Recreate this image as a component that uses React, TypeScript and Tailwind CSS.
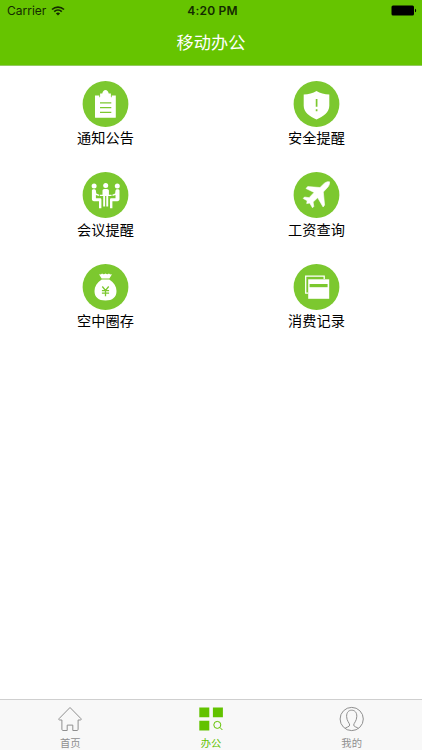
import type { ReactNode } from "react";

type MenuItem = {
  label: string;
  icon: ReactNode;
};

const items: MenuItem[] = [
  {
    label: "通知公告",
    icon: (
      <>
        <path
          d="M12.5 14.5h4.3v2.2h12.4v-2.2h4.1v21.7a.6.6 0 0 1-.6.6H13.1a.6.6 0 0 1-.6-.6z"
          fill="#fff"
        />
        <path d="M17.6 15.9v-3.3h2.2c.4-2.4 1.6-3.6 3.2-3.6s2.8 1.2 3.2 3.6h2.2v3.3z" fill="#fff" />
        <path d="M16.8 16.5h12.4" stroke="#fff" />
        <path d="M17.5 21.8h11.3M17.5 26.6h11.3M17.5 31.3h11.3" stroke="#7cc82f" strokeWidth="1.3" />
      </>
    ),
  },
  {
    label: "安全提醒",
    icon: (
      <>
        <path
          d="M23 10c3.5 2.2 8 3.3 12.8 3.5v11.2c0 6.5-6 10.8-12.8 13.7-6.8-2.9-12.8-7.2-12.8-13.7V13.5c4.8-.2 9.300-1.300 12.800-3.500z"
          fill="#fff"
        />
        <path d="M23.1 18v7.800M23.1 28.200v2" stroke="#7cc82f" strokeWidth="1.700" />
      </>
    ),
  },
  {
    label: "会议提醒",
    icon: (
      <g fill="#fff">
        <circle cx="11.6" cy="14.1" r="2.5" />
        <circle cx="23.200" cy="13.500" r="2.500" />
        <circle cx="34.800" cy="14.100" r="2.500" />
        <path d="M9.400 18.600c0-1.800 3.800-1.800 4 0l.4 2.800 2.900 1.300-.5 1.200-2.800-.9v3.300h4.100c.9 0 1.400.5 1.400 1.400v8.500h-2.400v-7h-4.900c-1.500 0-2.200-.8-2.200-2.200z" />
        <path d="M37 18.600c0-1.800-3.800-1.800-4 0l-.4 2.800-2.900 1.300.5 1.200 2.800-.9v3.300h-4.100c-.9 0-1.400.5-1.400 1.400v8.500h2.400v-7h4.900c1.500 0 2.200-.8 2.200-2.200z" />
        <path d="M20 22.800v-4.300c0-1.900 6.400-1.900 6.400 0v4.300h2.700v1.300H17.300v-1.300z" />
        <path d="M20.700 24h1.900v10.600h-1.900zM23.800 24h1.900v10.600h-1.900z" />
      </g>
    ),
  },
  {
    label: "工资查询",
    icon: (
      <path
        d="M36 9.800c.3 1.900-.4 3.800-1.600 5.200l-4.600 5 1.300 13.100-1.500 1.900-5.400-9.300-4.600 4.400.7 4.300-1.300 1.400-2.800-4.700-3 .5.500-2.900-4-2.200 1.300-1.500 4.600.7 5-5.300-8.100-3.900 1.700-1.900 12.300.9 4.200-4.100c1.500-1.300 3.300-1.900 5.300-1.600z"
        fill="#fff"
        stroke="#fff"
        strokeWidth=".6"
        strokeLinejoin="round"
      />
    ),
  },
  {
    label: "空中圈存",
    icon: (
      <>
        <path
          d="M16.500 10.300c1 .3 2.200.1 3.100-.7 1 .8 2.200.8 3.400 0 1.200.8 2.400.8 3.400 0 .9.800 2.100 1 3.100.7l-2.600 4.200h-7.800z"
          fill="#fff"
        />
        <path
          d="M19.200 15.600h7.600c4.800 3.200 7.200 7 7.200 11.500 0 6.300-4 9.500-11 9.500s-11-3.200-11-9.500c0-4.500 2.400-8.300 7.200-11.500z"
          fill="#fff"
        />
        <path
          d="m19.800 22.500 3.200 4 3.200-4M19.400 26.700h7.200M19.400 29.200h7.200M23 26.500v5.800"
          fill="none"
          stroke="#7cc82f"
          strokeWidth="1.300"
        />
      </>
    ),
  },
  {
    label: "消费记录",
    icon: (
      <>
        <path d="M14.600 29.200h-2.400V12.200h18.500v2.700" fill="none" stroke="#fff" strokeWidth="1.300" />
        <path d="M14.700 15.300h21v19.500h-21z" fill="#fff" />
        <path d="M16.100 20h18v3.200h-18z" fill="#7cc82f" />
      </>
    ),
  },
];

function StatusBar() {
  return (
    <div className="grid h-[22px] grid-cols-3 items-center pl-[7px] pr-[5px] text-xs text-[#142b00]">
      <div className="flex items-center gap-[5px]">
        <span>Carrier</span>
        <svg width="14" height="10" viewBox="0 0 14 10" fill="none" stroke="#142b00" strokeWidth="1.700">
          <path d="M1 3.500C4.400.3 9.600.3 13 3.500" />
          <path d="M3.200 5.700c2.200-2 5.400-2 7.600 0" />
          <path d="M4.900 7.400 7 9.600l2.100-2.200c-1.200-1.100-3-1.100-4.200 0z" fill="#142b00" stroke="none" />
        </svg>
      </div>
      <span className="pl-px text-center font-semibold tracking-[0.2px]">4:20 PM</span>
      <div className="flex justify-end pb-px">
        <svg width="26" height="11" viewBox="0 0 26 11">
          <rect x=".5" y=".5" width="22.500" height="10" rx="1.500" />
          <path d="M24 3.700c1.500.3 1.500 3.300 0 3.600z" />
        </svg>
      </div>
    </div>
  );
}

function TabBar() {
  return (
    <nav className="grid h-[51px] grid-cols-3 border-t border-[#cfcfcf] bg-[#f8f8f8] text-center text-[10.3px] leading-[14px] text-[#8f8f8f]">
      <div className="flex flex-col items-center pt-[6px]">
        <svg width="26" height="26" viewBox="0 0 26 26" fill="none" stroke="#8f8f8f" strokeLinejoin="round">
          <path d="M13 1.500 2 12.700c-.5.600-.1 1.300.6 1.300h2.300v9.400c0 .6.400 1.100 1 1.100h4.300v-5.400h5.600v5.400h4.300c.6 0 1-.5 1-1.100V14h2.300c.7 0 1.100-.7.600-1.300z" />
        </svg>
        <span className="mt-[4px]">首页</span>
      </div>
      <div className="flex flex-col items-center pt-[6px] text-[#62c200]">
        <svg width="26" height="26" viewBox="0 0 26 26" fill="none">
          <path d="M1.300 1.500h10v9.800h-10zM14.900 1.500h10v9.800h-10zM1.300 14.800h10v9.800h-10z" fill="#62c200" />
          <circle cx="19.300" cy="18.900" r="3.500" stroke="#62c200" />
          <path d="m21.900 21.400 2.500 2.600" stroke="#62c200" />
        </svg>
        <span className="mt-[4px]">办公</span>
      </div>
      <div className="flex flex-col items-center pt-[6px]">
        <svg width="26" height="26" viewBox="0 0 26 26" fill="none" stroke="#8f8f8f">
          <circle cx="12.700" cy="13" r="11.600" />
          <path d="M6 22.500c.8-1.300 4.700-1.500 4.700-3.500 0-1.700-3.100-4.100-3.100-8.700 0-3.900 2-6.100 5.100-6.100s5.100 2.200 5.100 6.100c0 4.600-3.100 7-3.100 8.700 0 2 3.900 2.200 4.700 3.500" />
        </svg>
        <span className="mt-[4px]">我的</span>
      </div>
    </nav>
  );
}

export default function App() {
  return (
    <div className="flex h-screen flex-col bg-white font-[Inter,'Noto_Sans_CJK_SC',sans-serif]">
      <header className="h-[66px] border-b border-[#94c95f] bg-[#66c400]">
        <StatusBar />
        <h1 className="text-center text-[17.2px] leading-[42px] text-white">移动办公</h1>
      </header>

      <main className="flex-1 pt-[14.8px]">
        <div className="grid auto-rows-[91.5px] grid-cols-2">
          {items.map((item) => (
            <div key={item.label} className="flex flex-col items-center">
              <svg width="47" height="46" viewBox="-0.5 0 47 46">
                <circle cx="23" cy="23" r="22.900" fill="#7cc82f" />
                {item.icon}
              </svg>
              <span className="mt-[0.3px] text-[14.2px] leading-[22px] text-black">{item.label}</span>
            </div>
          ))}
        </div>
      </main>

      <TabBar />
    </div>
  );
}
